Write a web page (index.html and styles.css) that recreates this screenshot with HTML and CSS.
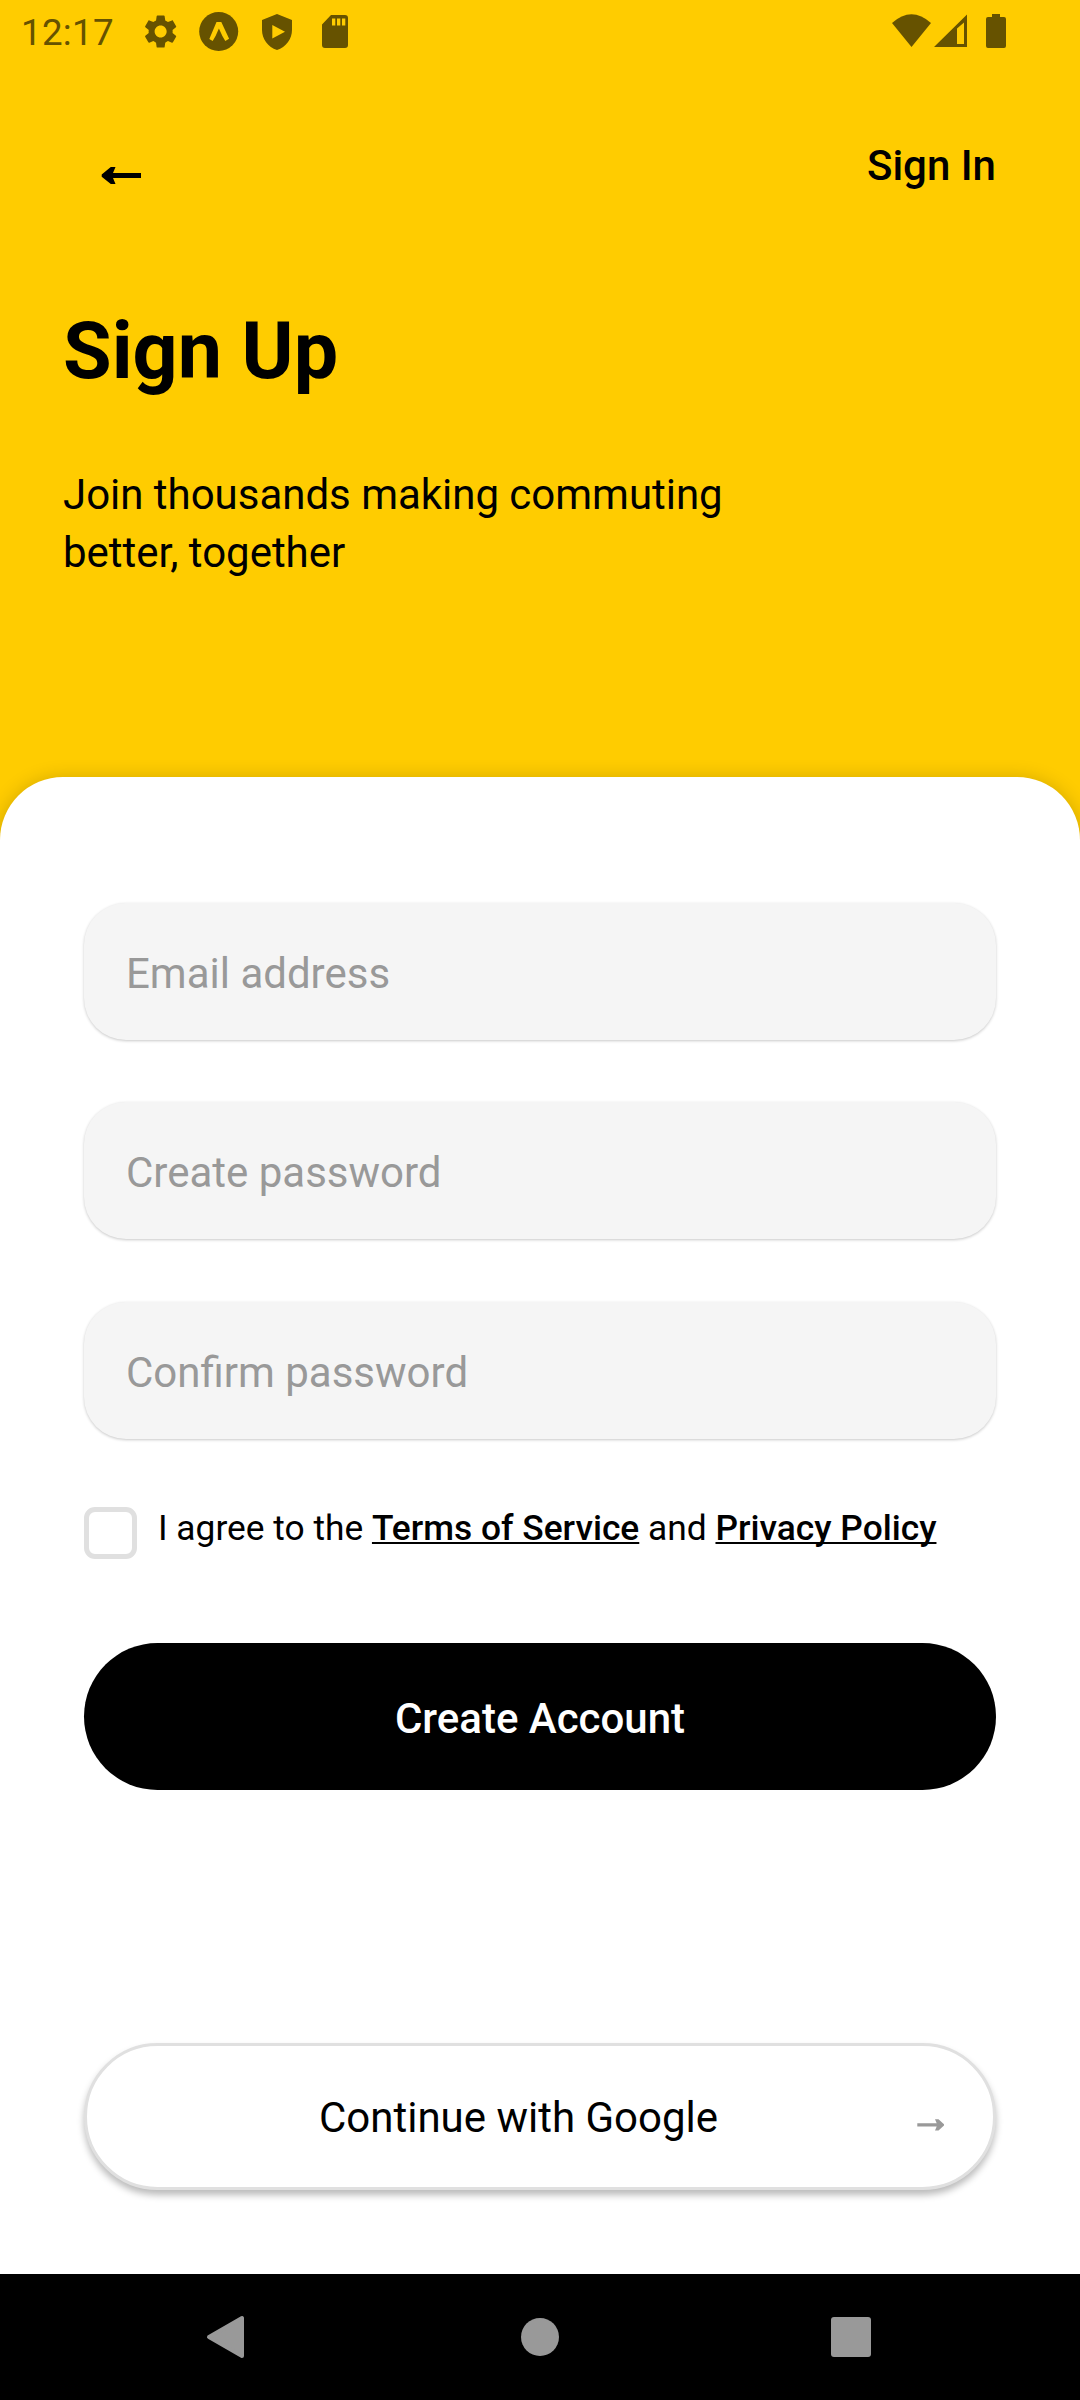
FILE: index.html
```html
<!DOCTYPE html>
<html lang="en">
<head>
<meta charset="utf-8">
<title>Sign Up</title>
<link rel="stylesheet" href="styles.css">
</head>
<body>
<div class="screen">
  <header class="hero">
    <div class="status">
      <span class="clock">12:17</span>
      <svg class="status-icons" viewBox="0 0 220 64" width="220" height="64" fill="#665200">
        <path transform="translate(10.600 11.500) scale(1.67)" d="M19.140 12.940c.04-.3.06-.61.06-.94 0-.32-.02-.64-.07-.94l2.030-1.580c.18-.14.23-.41.12-.61l-1.920-3.320c-.12-.22-.37-.29-.59-.22l-2.390.96c-.5-.38-1.030-.7-1.620-.94l-.36-2.540c-.04-.24-.24-.41-.48-.41h-3.840c-.24 0-.43.17-.47.41l-.36 2.540c-.59.24-1.130.57-1.620.94l-2.390-.96c-.22-.08-.47 0-.59.22L2.740 8.870c-.12.21-.08.47.12.61l2.030 1.580c-.05.3-.09.63-.09.94s.02.64.07.94l-2.030 1.580c-.18.14-.23.41-.12.61l1.920 3.320c.12.22.37.29.59.22l2.390-.96c.5.38 1.030.7 1.620.94l.36 2.540c.05.24.24.41.48.41h3.840c.24 0 .44-.17.47-.41l.36-2.540c.59-.24 1.130-.56 1.620-.94l2.390.96c.22.08.47 0 .59-.22l1.920-3.320c.12-.22.07-.47-.12-.61l-2.010-1.580zM12 15.600c-1.980 0-3.600-1.620-3.600-3.600s1.620-3.600 3.600-3.600 3.600 1.620 3.600 3.600-1.620 3.600-3.600 3.600z"/>
        <circle cx="88.700" cy="31.500" r="19.500"/>
        <path fill="#ffcc00" d="M86.500 22h4.800l7.800 16.800-3.800 2.200q-3-4.500-6.400-12.500-3.200 8-6.200 12.500l-3.400-2z"/>
        <path fill-rule="evenodd" d="M147 14l15 6v10c0 9-6 17-15 20-9-3-15-11-15-20V20zM142.300 25v13.500l12.700-6.700z"/>
        <path fill-rule="evenodd" d="M201 15h14q3 0 3 3v27q0 3-3 3h-20q-3 0-3-3V24.500zM202 18.500v7h3.300v-7zm5 0v7h3.300v-7zm5 0v7h3.300v-7z"/>
      </svg>
      <svg class="signal" viewBox="0 0 120 64" width="120" height="64" fill="#665200">
        <path d="M0 23Q19.500 5.500 39 23L19.500 47z"/>
        <path fill-rule="evenodd" d="M42 47 75 14.500V47zM65 28.500V44H72V22.500z"/>
        <path d="M100 14h8v3h4q2 0 2 2v27q0 2-2 2h-16q-2 0-2-2V19q0-2 2-2h4z"/>
      </svg>
    </div>
    <nav class="top">
      <svg class="back" viewBox="0 0 44 30" width="44" height="30"><path d="M.7 14.500 9.800 7h4.700L12 13H40v5H12l2.500 6H9.800L.7 16.700z"/></svg>
      <a class="signin">Sign In</a>
    </nav>
    <h1 class="title">Sign Up</h1>
    <p class="lead">Join thousands making commuting better, together</p>
  </header>
  <main class="sheet">
    <div class="field">Email address</div>
    <div class="field">Create password</div>
    <div class="field">Confirm password</div>
    <div class="agree"><span class="box"></span><span class="terms">I agree to the <b>Terms of Service</b> and <b>Privacy Policy</b></span></div>
    <div class="create">Create Account</div>
    <div class="google"><span class="google-label">Continue with Google</span><svg class="arrow" viewBox="0 0 28 12" width="28" height="12"><path d="M27 5.300 21.500.3H18l1.700 4H.3v3.200h19.400L18 11.500h3.500L27 6.500z"/></svg></div>
  </main>
  <footer class="navbar">
    <svg viewBox="0 0 1080 126" width="1080" height="126" fill="#999">
      <path stroke="#999" stroke-width="4" stroke-linejoin="round" d="M209 63 242 44V82z"/><circle cx="540" cy="63" r="19"/><rect x="831" y="43" width="40" height="40" rx="3"/>
    </svg>
  </footer>
</div>
</body>
</html>
```
FILE: styles.css
```css
* { box-sizing: border-box; }
body { margin: 0; font-family: Roboto, sans-serif; color: #000; }
.screen { width: 1080px; height: 2400px; display: flex; flex-direction: column; background: #ffcc00; }
.hero { height: 777px; flex: none; }
.status { height: 64px; display: flex; align-items: center; padding: 0 68px 0 21px; color: #665200; }
.clock { width: 109px; font-size: 36.7px; letter-spacing: 0.3px; }
.signal { margin-left: auto; }
.top { display: flex; justify-content: space-between; padding: 76px 84px 0 101px; height: 240px; }
.back { margin-top: 20px; }
.signin { font-size: 42px; font-weight: 500; line-height: 52px; }
.title { margin: 0; padding-left: 63px; font-size: 79px; line-height: 94px; font-weight: 700; }
.lead { margin: 68px 0 0 63px; width: 700px; font-size: 42px; line-height: 58px; letter-spacing: -0.02px; }
.sheet { height: 1497px; flex: none; background: #fff; border-radius: 63px 63px 0 0; padding: 125.5px 84px 0; box-shadow: 0 2px 20px rgba(0,0,0,.2); }
.field { height: 137px; margin-bottom: 62.5px; border-radius: 42px; background: #f5f5f5; color: #999; font-size: 42px; line-height: 142px; padding-left: 42px; box-shadow: 0 1px 3px rgba(0,0,0,.22); }
.agree { display: flex; height: 52px; gap: 21px; margin-top: 68.5px; }
.box { width: 53px; height: 52px; border: 5px solid #e0e0e0; border-radius: 11px; }
.terms { font-size: 35.35px; line-height: 42px; white-space: nowrap; }
.terms b { font-weight: 500; text-decoration: underline; text-decoration-skip-ink: none; text-decoration-thickness: 2px; text-underline-offset: 2px; }
.create { margin-top: 83.5px; height: 147px; border-radius: 74px; background: #000; color: #fff; font-size: 42px; font-weight: 500; line-height: 151px; text-align: center; }
.google { margin-top: 253px; height: 147px; border-radius: 74px; border: 3px solid #e0e0e0; background: #fff; font-size: 42px; display: flex; align-items: center; padding: 3px 47px 0 45px; box-shadow: 0 5px 7px rgba(0,0,0,.27); }
.google-label { flex: 1; text-align: center; }
.arrow { fill: #999; margin: 15px 1px 0 12px; }
.navbar { height: 126px; background: #000; }
.navbar svg { display: block; }
```
